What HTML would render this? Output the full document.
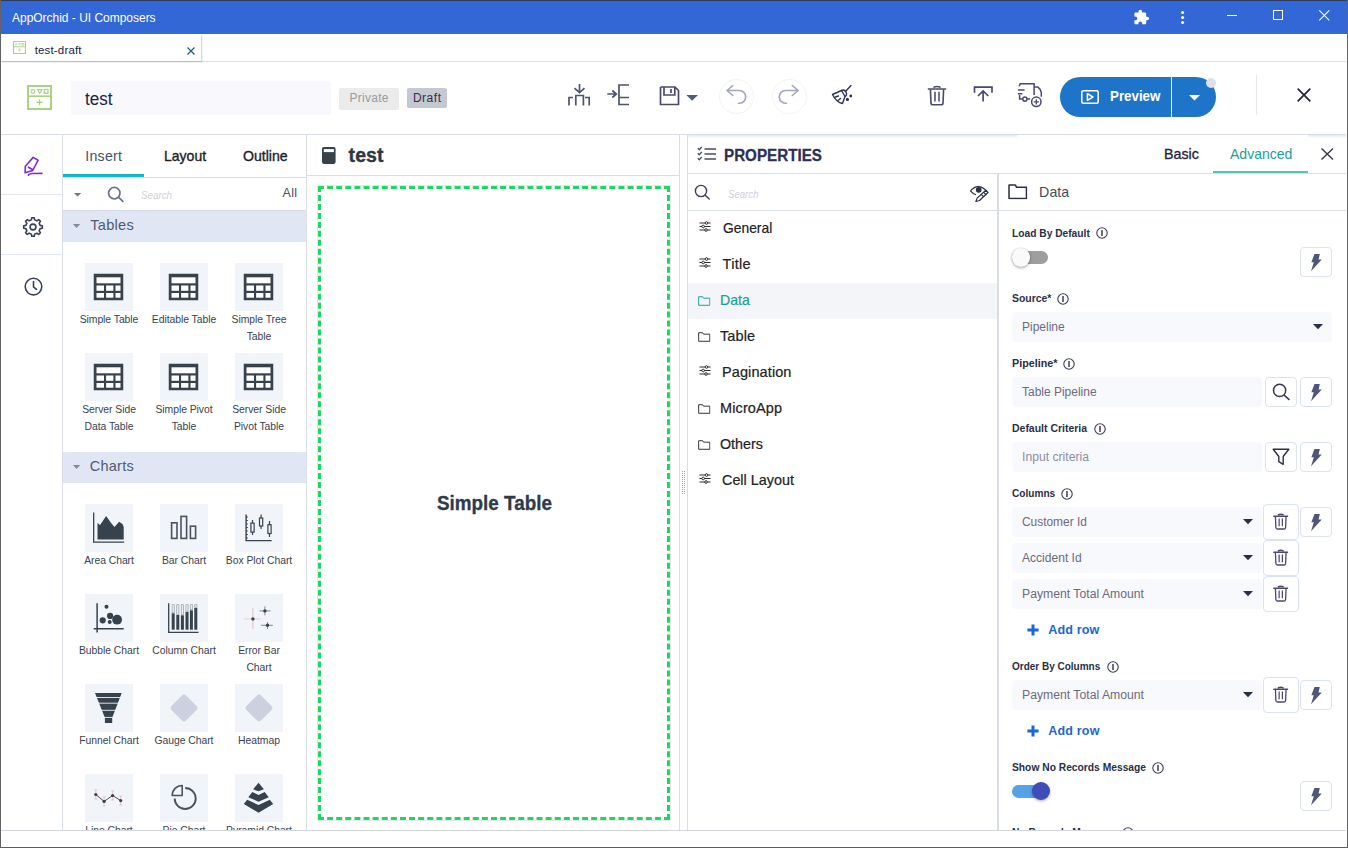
<!DOCTYPE html>
<html>
<head>
<meta charset="utf-8">
<title>AppOrchid - UI Composers</title>
<style>
*{box-sizing:border-box;margin:0;padding:0}
html,body{width:1348px;height:848px;overflow:hidden;background:#fff}
body{font-family:"Liberation Sans",sans-serif;color:#222;position:relative}
.a{position:absolute}
.t{position:absolute;white-space:nowrap;line-height:1}
.ln{position:absolute;background:#d9dee4}
svg{position:absolute;overflow:visible}
/* title bar */
#tb{left:1px;top:1px;width:1346px;height:33px;background:#3367d6}
/* palette */
.tile{position:absolute;width:48px;height:48px;background:#f1f4f9}
.lbl{position:absolute;width:90px;text-align:center;font-size:10.400px;line-height:17px;color:#3a4250;letter-spacing:-.05px;margin-top:-.8px}
.sec{position:absolute;left:63px;width:243px;height:32px;background:#e1e6f4}
.sec .t{left:27px;top:7px;font-size:15px;color:#4f5b73;letter-spacing:.4px}
/* props list */
.li{position:absolute;left:688px;width:309px;height:36px}
.li .t{top:10px;font-size:15px;color:#222;letter-spacing:.1px;-webkit-text-stroke:.2px currentColor}
/* fields */
.flab{position:absolute;left:1012px;font-size:11px;font-weight:bold;color:#2a2f45;white-space:nowrap;line-height:1;letter-spacing:.1px}
.fld{position:absolute;left:1012px;height:30px;background:#f8f9fd;border-radius:4px}
.fld .t{left:10px;top:9px;font-size:12px;color:#6d6a80}
.btn{position:absolute;background:#fff;border:1px solid #dde2f3;border-radius:4px}
</style>
</head>
<body>
<!-- window frame -->
<div class="a" style="left:0;top:0;width:1348px;height:1px;background:#2c3b5e"></div>
<div class="a" style="left:0;top:0;width:1px;height:848px;background:#636363"></div>
<div class="a" style="left:1347px;top:0;width:1px;height:848px;background:#636363"></div>
<div class="a" style="left:0;top:847px;width:1348px;height:1px;background:#606060"></div>

<!-- TITLE BAR -->
<div class="a" id="tb"></div>
<div class="t" id="ttl" style="left:11.7px;top:12.0px;font-size:12.5px;letter-spacing:0.00px;transform:scaleX(0.957);transform-origin:0 0;color:#fff">AppOrchid - UI Composers</div>

<!-- TAB STRIP -->
<div class="ln" style="left:1px;top:61px;width:1345px;height:1px;background:#dcdfe3"></div>
<div class="a" style="left:2px;top:35px;width:200px;height:26px;background:#fff;border-right:1px solid #dcdcdc;box-shadow:0 1px 1px #b9bec5"></div>
<div class="t" id="tabtxt" style="left:34.7px;top:45.0px;font-size:11.5px;letter-spacing:0.16px;transform:scaleX(1.000);transform-origin:0 0;color:#1c1c44">test-draft</div>

<!-- HEADER -->
<div class="ln" style="left:1px;top:134px;width:1345px;height:1px"></div>
<div class="a" style="left:71px;top:81px;width:260px;height:34px;background:#f8f8fd;border-radius:2px"></div>
<div class="t" id="hname" style="left:85.1px;top:90.0px;font-size:18px;letter-spacing:0.00px;transform:scaleX(0.948);transform-origin:0 0;color:#23233f">test</div>
<div class="a" style="left:339px;top:88px;width:60px;height:22px;background:#ebebeb;border-radius:2px"></div>
<div class="t" id="bpriv" style="left:349.4px;top:92.0px;font-size:12px;letter-spacing:0.29px;transform:scaleX(1.000);transform-origin:0 0;color:#9a9a9a">Private</div>
<div class="a" style="left:407px;top:88px;width:40px;height:20px;background:#c3c8d1;border-radius:2px"></div>
<div class="t" id="bdraft" style="left:412.9px;top:92.0px;font-size:12px;letter-spacing:0.52px;transform:scaleX(1.000);transform-origin:0 0;color:#3a2c4c">Draft</div>

<!-- PANEL DIVIDERS -->
<div class="ln" style="left:62px;top:135px;width:1px;height:695px"></div>
<div class="ln" style="left:306px;top:135px;width:1px;height:695px"></div>
<div class="ln" style="left:679px;top:135px;width:1px;height:695px"></div>
<div class="ln" style="left:687px;top:135px;width:1px;height:695px"></div>
<div class="ln" style="left:997px;top:173px;width:2px;height:657px"></div>
<div class="ln" style="left:1px;top:830px;width:1345px;height:1px;background:#d4d8dc"></div>


<!-- shared symbols -->
<svg width="0" height="0" style="left:0;top:0">
 <defs>
  <symbol id="appico" viewBox="0 0 25 25">
   <rect x="1" y="1" width="23" height="23" fill="#fff" stroke="#a9d383" stroke-width="2"/>
   <line x1="1" y1="11.200" x2="24" y2="11.200" stroke="#a9d383" stroke-width="1.700"/>
   <circle cx="5.900" cy="6.500" r="1.900" fill="none" stroke="#a9d383" stroke-width="1.100"/>
   <path d="M10.500 4.600h4.400l-2.200 3.800z" fill="none" stroke="#a9d383" stroke-width="1.100"/>
   <rect x="17.200" y="4.500" width="3.800" height="3.800" fill="none" stroke="#a9d383" stroke-width="1.300"/>
   <path d="M12.600 14.300v5.900M9.700 17.250h5.900" stroke="#a9d383" stroke-width="1.300" fill="none"/>
  </symbol>
  <symbol id="bolt" viewBox="0 0 9.600 15.400"><path fill="#50557a" d="M3.100 0h4.750L6.700 5h2.900L0 15.400 2.500 7.400H0.300z"/></symbol>
  <symbol id="info" viewBox="0 0 12 12">
   <circle cx="6" cy="6" r="5.2" fill="none" stroke="#3b3f55" stroke-width="1.1"/>
   <path d="M6 3.100v5.800" stroke="#2e3247" stroke-width="1.400"/>
  </symbol>
  <symbol id="trash" viewBox="0 0 20 22">
   <path d="M1 4.2h18M7 2.2q3-1.2 6 0" fill="none" stroke="#4a4870" stroke-width="1.7" stroke-linecap="round"/>
   <path d="M3.100 4.600l.6 14.200q.1 1.900 2 1.900h8.600q1.900 0 2-1.900l.6-14.200" fill="none" stroke="#4a4870" stroke-width="1.700"/>
   <path d="M7.9 7.2v10M12.1 7.2v10" stroke="#4a4870" stroke-width="1.6"/>
  </symbol>
  <symbol id="folder" viewBox="0 0 19 15">
   <path d="M1 1h6.2l1.2 2.2H18v10.800H1z" fill="none" stroke-width="1.5" stroke-linejoin="round"/>
  </symbol>
  <symbol id="sliders" viewBox="0 0 12 11">
   <path d="M0.500 2h11M0.500 5.500h11M0.500 9h11" stroke="#2c2c30" stroke-width="1"/>
   <circle cx="7.5" cy="2" r="1.3" fill="#fff" stroke="#2c2c30" stroke-width="1"/>
   <circle cx="4.2" cy="5.5" r="1.3" fill="#fff" stroke="#2c2c30" stroke-width="1"/>
   <circle cx="7" cy="9" r="1.3" fill="#fff" stroke="#2c2c30" stroke-width="1"/>
  </symbol>
  <symbol id="tbl" viewBox="0 0 30 27">
   <rect x="0" y="0" width="30" height="27" fill="#37424c"/>
   <rect x="3" y="3.800" width="24" height="6" fill="#fff"/>
   <rect x="3" y="12" width="7.500" height="5.300" fill="#fff"/><rect x="12.600" y="12" width="7.300" height="5.300" fill="#fff"/><rect x="22" y="12" width="5" height="5.300" fill="#fff"/>
   <rect x="3" y="19.500" width="7.500" height="4.700" fill="#fff"/><rect x="12.600" y="19.500" width="7.300" height="4.700" fill="#fff"/><rect x="22" y="19.500" width="5" height="4.700" fill="#fff"/>
  </symbol>
 </defs>
</svg>

<!-- title bar icons -->
<svg style="left:1133.300px;top:9.400px" width="16.700" height="16.700" viewBox="0 0 24 24"><path fill="#fff" d="M20.500 11H19V7c0-1.100-.9-2-2-2h-4V3.500C13 2.120 11.880 1 10.500 1S8 2.120 8 3.500V5H4c-1.100 0-1.990.9-1.990 2v3.800H3.500c1.490 0 2.700 1.210 2.700 2.700s-1.210 2.700-2.700 2.700H2V20c0 1.100.9 2 2 2h3.800v-1.500c0-1.490 1.210-2.700 2.700-2.700 1.490 0 2.700 1.210 2.700 2.700V22H17c1.100 0 2-.9 2-2v-4h1.500c1.380 0 2.500-1.120 2.500-2.500S21.880 11 20.500 11z"/></svg>
<svg style="left:1180px;top:10px" width="6" height="16"><circle cx="2.600" cy="2.500" r="1.500" fill="#fff"/><circle cx="2.600" cy="7.500" r="1.500" fill="#fff"/><circle cx="2.600" cy="12.500" r="1.500" fill="#fff"/></svg>
<div class="a" style="left:1227px;top:15px;width:10px;height:1px;background:#fff"></div>
<div class="a" style="left:1273px;top:10px;width:10px;height:10px;border:1px solid #fff"></div>
<svg style="left:1319px;top:10px" width="11" height="11"><path d="M0.300 0.300l10 10M10.300 0.300l-10 10" stroke="#fff" stroke-width="1.100"/></svg>

<!-- tab icon + close -->
<svg style="left:13px;top:41px" width="13" height="13"><use href="#appico"/></svg>
<svg style="left:187px;top:47px" width="8" height="8"><path d="M0.500 0.500l7 7M7.500 0.500l-7 7" stroke="#1d5f80" stroke-width="1.200"/></svg>

<!-- header app icon -->
<svg style="left:27.400px;top:85.200px" width="25" height="25"><use href="#appico"/></svg>

<!-- header toolbar icons -->
<svg style="left:560px;top:76px" width="150" height="40" fill="none" stroke="#4e5470" stroke-width="1.700">
 <path d="M19.500 8v8.500M14.500 12.200l5 4.500 5-4.500"/>
 <path d="M9 29.500v-8h4M15.800 29.500v-10h7.600v10M25 21.500h4.200v8"/>
 <path d="M47.300 18h8.500M52.300 14.500l4 3.500-4 3.500"/>
 <path d="M69 9h-10v12.500h10M59 21.500v7h10"/>
 <path d="M100.500 11v17.500h18v-14l-3.500-3.500h-14.500M104 11v8h10.800v-8M111 13v4" stroke="#4a4870"/>
 <path d="M126.300 19h11.700l-5.850 5.800z" fill="#565b7c" stroke="none"/>
</svg>
<!-- undo / redo -->
<div class="a" style="left:719px;top:79px;width:35px;height:35px;border:1px solid #f4f4f8;border-radius:50%"></div>
<div class="a" style="left:772px;top:79px;width:35px;height:35px;border:1px solid #f4f4f8;border-radius:50%"></div>
<svg style="left:710px;top:76px" width="150" height="40" fill="none" stroke="#a3a6ba" stroke-width="1.600" stroke-linecap="round" stroke-linejoin="round">
 <path d="M22.800 9.500l-5.800 5 5.800 5M17 14.500h12.500a6.200 6.400 0 0 1 0 12.800h-1"/>
 <path d="M82.300 9.500l5.800 5-5.800 5M88 14.500h-12.500a6.200 6.400 0 0 0 0 12.800h1"/>
</svg>
<!-- broom -->
<svg style="left:830px;top:80px" width="26" height="28" fill="none" stroke="#2e3458" stroke-width="1.400" stroke-linecap="round" stroke-linejoin="round">
 <path d="M21 5.500l-5.500 6"/>
 <path d="M11.500 10.500q3-1.500 4.500 1.500t-1 4.500"/>
 <path d="M2.500 14.500l9-4 3.500 6-2.500 7q-6-1-10-9z"/>
 <path d="M5.500 17l3-1M8 20.500l2.500-2"/>
 <circle cx="17.400" cy="19.400" r="0.900" fill="#2e3458"/><circle cx="20.800" cy="16" r="0.700" fill="#2e3458"/>
</svg>
<!-- trash / upload / truck -->
<svg style="left:927px;top:84.500px" width="20" height="21"><use href="#trash"/></svg>
<svg style="left:970px;top:80.400px" width="30" height="30" fill="none" stroke="#4a4870" stroke-width="1.700">
 <path d="M4.500 12.700v-5.600h17.500v5.600M13.100 21.400v-10.600M8 16l5.100-5 5.200 5"/>
</svg>
<svg style="left:1014px;top:80px" width="34" height="30" fill="none" stroke="#4a4870" stroke-width="1.500">
 <path d="M5.200 6.200l1-2.400h13.900v11.100M3.900 9.900h6.700M3.900 13.800h4.500M5.600 14.900v4.200h2.800M13.200 19.100h3"/>
 <circle cx="10.900" cy="19.100" r="2.100"/>
 <path d="M20.100 7.100h3.900q2.500 1.500 3.300 5.600v4"/>
 <circle cx="22.300" cy="21.800" r="4.700" fill="#fff"/>
 <path d="M22.300 19.200v5.200M19.700 21.800h5.200" stroke-width="1.300"/>
</svg>
<!-- preview button -->
<div class="a" style="left:1060px;top:77px;width:156px;height:40px;border-radius:20px;background:#1e74c9"></div>
<div class="a" style="left:1170.500px;top:77px;width:1.500px;height:40px;background:#e6eef9"></div>
<svg style="left:1081px;top:90px" width="18" height="14" fill="none" stroke="#fff" stroke-width="1.500"><rect x="0.800" y="0.800" width="16.400" height="12.400" rx="1.500"/><path d="M6.400 3.700v6.600l5.500-3.300z" stroke-width="1.500" stroke-linejoin="round"/></svg>
<div class="t" id="prev" style="left:1109.9px;top:89.0px;font-size:14.5px;letter-spacing:0.00px;transform:scaleX(0.919);transform-origin:0 0;font-weight:bold;color:#fff">Preview</div>
<svg style="left:1188.500px;top:94.500px" width="11" height="6"><path d="M0 0h11l-5.500 5.500z" fill="#fff"/></svg>
<div class="a" style="left:1205.500px;top:77.800px;width:10px;height:10px;border-radius:50%;background:#dcdff0"></div>
<div class="a" style="left:1256px;top:75px;width:1px;height:40px;background:#e2e6f0"></div>
<svg style="left:1297px;top:88px" width="14" height="14"><path d="M0.700 0.700l12.600 12.600M13.300 0.700l-12.600 12.600" stroke="#23233a" stroke-width="1.700"/></svg>

<!-- LEFT RAIL -->
<div class="ln" style="left:1px;top:194px;width:61px;height:1px;background:#e4e7f6"></div>
<div class="ln" style="left:1px;top:254px;width:61px;height:1px;background:#e4e7f6"></div>
<svg style="left:20px;top:152px" width="28" height="28" fill="none" stroke="#7c2ae8" stroke-width="1.600" stroke-linejoin="round" stroke-linecap="round">
 <path d="M13.200 5.400l4.800 2.900-5.300 10.200-7.600 2.300.2-6.600z"/>
 <path d="M8.400 15.200l4.100 2.300"/>
 <path d="M8.400 23.200c.3-1.100 1.500-1.600 4-1.700l9.500-.1"/>
</svg>
<svg style="left:21px;top:214.600px" width="24" height="24" viewBox="-12 -12 24 24" fill="none" stroke="#3a3f5a" stroke-width="1.600" stroke-linejoin="round">
 <path d="M7.120 -1.610 L9.320 -1.240 L9.320 1.240 L7.120 1.610 L6.170 3.890 L7.460 5.710 L5.710 7.460 L3.890 6.170 L1.610 7.120 L1.240 9.320 L-1.240 9.320 L-1.610 7.120 L-3.890 6.170 L-5.710 7.460 L-7.460 5.710 L-6.170 3.890 L-7.120 1.610 L-9.320 1.240 L-9.320 -1.240 L-7.120 -1.610 L-6.170 -3.890 L-7.460 -5.710 L-5.710 -7.460 L-3.890 -6.170 L-1.610 -7.120 L-1.240 -9.320 L1.240 -9.320 L1.610 -7.120 L3.890 -6.170 L5.710 -7.460 L7.460 -5.710 L6.170 -3.890Z"/>
 <circle cx="0" cy="0" r="2.900"/>
</svg>
<svg style="left:22.700px;top:275.700px" width="22" height="22" fill="none" stroke="#3a3f5a" stroke-width="1.600" stroke-linecap="round"><circle cx="10.500" cy="10.600" r="8.300"/><path d="M10.500 5.600v5.200l3 2.500"/></svg>


<!-- PALETTE -->
<div class="t" id="tIns" style="left:85.3px;top:149.0px;font-size:14.2px;letter-spacing:0.24px;transform:scaleX(1.000);transform-origin:0 0;color:#4a5068">Insert</div>
<div class="t" id="tLay" style="left:163.6px;top:149.0px;font-size:14.2px;letter-spacing:0.00px;transform:scaleX(0.988);transform-origin:0 0;color:#1e1e2a;-webkit-text-stroke:0.350px #1e1e2a">Layout</div>
<div class="t" id="tOut" style="left:243.3px;top:149.0px;font-size:14.2px;letter-spacing:0.00px;transform:scaleX(0.994);transform-origin:0 0;color:#1e1e2a;-webkit-text-stroke:0.350px #1e1e2a">Outline</div>
<div class="ln" style="left:63px;top:177px;width:243px;height:1px"></div>
<div class="a" style="left:63px;top:174px;width:81px;height:3px;background:#10b9c9"></div>
<svg style="left:73.500px;top:192.500px" width="8" height="4"><path d="M0 0h7.200l-3.600 3.600z" fill="#6f7688"/></svg>
<svg style="left:106px;top:185px" width="20" height="20" fill="none" stroke="#6a7488" stroke-width="1.700" stroke-linecap="round"><circle cx="8.300" cy="8.100" r="5.700"/><path d="M12.600 12.300l4.300 4.100"/></svg>
<div class="t" id="pSearch" style="left:141.3px;top:190.0px;font-size:10.5px;letter-spacing:0.00px;transform:scaleX(0.934);transform-origin:0 0;font-style:italic;color:#cfd0d6">Search</div>
<div class="t" id="pAll" style="left:282.6px;top:187.0px;font-size:12.5px;letter-spacing:0.30px;transform:scaleX(1.000);transform-origin:0 0;color:#4a4f5e">All</div>
<div class="sec" style="top:210px;border-top:1px solid #d9dee4"><div class="t" id="sTables" style="left:27.3px;top:7.0px;font-size:14.6px;letter-spacing:0.26px;transform:scaleX(1.000);transform-origin:0 0;">Tables</div></div>
<svg style="left:73px;top:224px" width="8" height="5"><path d="M0 0h7.200l-3.600 4z" fill="#8089a0"/></svg>
<div class="sec" style="top:452px;height:31px"><div class="t" id="sCharts" style="left:26.8px;top:7.0px;font-size:14.5px;letter-spacing:0.24px;transform:scaleX(1.000);transform-origin:0 0;">Charts</div></div>
<svg style="left:73px;top:465px" width="8" height="5"><path d="M0 0h7.200l-3.600 4z" fill="#8089a0"/></svg>
<div class="a" style="left:63px;top:242px;width:243px;height:588px;overflow:hidden"><div class="a" style="left:-63px;top:-242px">
<div class="tile" style="left:85px;top:263px"></div><svg style="left:85px;top:263px" width="48" height="48"><use href="#tbl" x="8.500" y="10.500" width="30" height="27"/></svg>
<div class="lbl" style="left:64px;top:312px">Simple Table</div>
<div class="tile" style="left:160px;top:263px"></div><svg style="left:160px;top:263px" width="48" height="48"><use href="#tbl" x="8.500" y="10.500" width="30" height="27"/></svg>
<div class="lbl" style="left:139px;top:312px">Editable Table</div>
<div class="tile" style="left:235px;top:263px"></div><svg style="left:235px;top:263px" width="48" height="48"><use href="#tbl" x="8.500" y="10.500" width="30" height="27"/></svg>
<div class="lbl" style="left:214px;top:312px">Simple Tree<br>Table</div>
<div class="tile" style="left:85px;top:353px"></div><svg style="left:85px;top:353px" width="48" height="48"><use href="#tbl" x="8.500" y="10.500" width="30" height="27"/></svg>
<div class="lbl" style="left:64px;top:402px">Server Side<br>Data Table</div>
<div class="tile" style="left:160px;top:353px"></div><svg style="left:160px;top:353px" width="48" height="48"><use href="#tbl" x="8.500" y="10.500" width="30" height="27"/></svg>
<div class="lbl" style="left:139px;top:402px">Simple Pivot<br>Table</div>
<div class="tile" style="left:235px;top:353px"></div><svg style="left:235px;top:353px" width="48" height="48"><use href="#tbl" x="8.500" y="10.500" width="30" height="27"/></svg>
<div class="lbl" style="left:214px;top:402px">Server Side<br>Pivot Table</div>
<div class="tile" style="left:85px;top:504px"></div><svg style="left:85px;top:504px" width="48" height="48"><path d="M8.700 8.600v29.500h30.500" fill="none" stroke="#37424c" stroke-width="1.300"/><path d="M12.500 35.500V19.100l2.600 2L21.100 12.100l5 7 3.400 4 4.600-5.400 3.400 2.400 1.200 3v12.400z" fill="#37424c"/></svg>
<div class="lbl" style="left:64px;top:553px">Area Chart</div>
<div class="tile" style="left:160px;top:504px"></div><svg style="left:160px;top:504px" width="48" height="48"><g fill="none" stroke="#4a535d" stroke-width="1.600"><rect x="11.600" y="18.800" width="5.400" height="15.600"/><rect x="21" y="12.400" width="5.600" height="22"/><rect x="30.400" y="22.200" width="5.200" height="12.200"/></g></svg>
<div class="lbl" style="left:139px;top:553px">Bar Chart</div>
<div class="tile" style="left:235px;top:504px"></div><svg style="left:235px;top:504px" width="48" height="48"><g fill="none" stroke="#37424c" stroke-width="1.200"><path d="M11.100 10.600v26h25.500" stroke-width="1.400"/><path d="M11.100 13h1.800M11.100 16.500h1.800M11.100 20h1.800M11.100 23.500h1.800M11.100 27h1.800M11.100 30.500h1.800M11.100 34h1.800" stroke-width="0.900"/><path d="M17.500 16.100v3M17.500 28.100v3M26.100 10.600v3.400M26.100 22v3M34.500 17v3.700M34.500 29.500v3.500"/><rect x="15.900" y="19.100" width="3.200" height="9"/><rect x="24.500" y="14" width="3.200" height="8"/><rect x="32.900" y="20.700" width="3.200" height="8.800"/></g></svg>
<div class="lbl" style="left:214px;top:553px">Box Plot Chart</div>
<div class="tile" style="left:85px;top:594px"></div><svg style="left:85px;top:594px" width="48" height="48"><path d="M12.100 9.300v29.100M8.700 34.700h30" fill="none" stroke="#37424c" stroke-width="1.500"/><g fill="#37424c"><circle cx="21.500" cy="12.700" r="2"/><circle cx="17.700" cy="26.300" r="3.100"/><circle cx="25.100" cy="21.900" r="3.100"/><circle cx="24.700" cy="28.100" r="2"/><circle cx="32.100" cy="25.700" r="4.900"/></g></svg>
<div class="lbl" style="left:64px;top:643px">Bubble Chart</div>
<div class="tile" style="left:160px;top:594px"></div><svg style="left:160px;top:594px" width="48" height="48"><path d="M8.700 9.300v29.100h29.800" fill="none" stroke="#37424c" stroke-width="1.300"/><rect x="11.7" y="19.3" width="3" height="16.4" fill="#37424c"/><rect x="12.1" y="10.700" width="2.200" height="8.0" fill="#e8ebee" stroke="#9aa3ab" stroke-width="0.700"/><rect x="16.3" y="20.9" width="3" height="14.8" fill="#37424c"/><rect x="16.7" y="10.700" width="2.200" height="9.6" fill="#e8ebee" stroke="#9aa3ab" stroke-width="0.700"/><rect x="20.9" y="21.3" width="3" height="14.4" fill="#37424c"/><rect x="21.299999999999997" y="10.700" width="2.200" height="10.0" fill="#e8ebee" stroke="#9aa3ab" stroke-width="0.700"/><rect x="25.5" y="17.9" width="3" height="17.8" fill="#37424c"/><rect x="25.9" y="10.700" width="2.200" height="6.6" fill="#e8ebee" stroke="#9aa3ab" stroke-width="0.700"/><rect x="29.9" y="16.3" width="3" height="19.4" fill="#37424c"/><rect x="30.299999999999997" y="10.700" width="2.200" height="5.0" fill="#e8ebee" stroke="#9aa3ab" stroke-width="0.700"/><rect x="34.3" y="13.9" width="3" height="21.8" fill="#37424c"/><rect x="34.699999999999996" y="10.700" width="2.200" height="2.6" fill="#e8ebee" stroke="#9aa3ab" stroke-width="0.700"/></svg>
<div class="lbl" style="left:139px;top:643px">Column Chart</div>
<div class="tile" style="left:235px;top:594px"></div><svg style="left:235px;top:594px" width="48" height="48"><g stroke="#e8a0a0" stroke-width="0.700" fill="none"><path d="M17.900 14.300v20.600"/><path d="M29.900 12.300v9M32.500 28.300v6.700" stroke="#37424c" stroke-width="0.600"/><path d="M9 24.900h16.500" stroke="#d8c0c4"/><path d="M24.500 16.900h11M25.900 31.300h12" stroke="#37424c" stroke-width="0.600"/></g><g fill="#37424c"><circle cx="17.900" cy="24.900" r="1.700"/><circle cx="29.900" cy="16.900" r="1.700"/><circle cx="32.500" cy="31.300" r="1.700"/></g></svg>
<div class="lbl" style="left:214px;top:643px">Error Bar<br>Chart</div>
<div class="tile" style="left:85px;top:684px"></div><svg style="left:85px;top:684px" width="48" height="48"><path d="M10 9.100h26.700L27.200 33.800v5.100h-7.300v-5.100z" fill="#37424c"/><path d="M9 13.500h30M9 19.200h30M9 26.300h30M9 33.400h30" stroke="#f1f4f9" stroke-width="0.900"/></svg>
<div class="lbl" style="left:64px;top:733px">Funnel Chart</div>
<div class="tile" style="left:160px;top:684px"></div><svg style="left:160px;top:684px" width="48" height="48"><rect x="13.700" y="13.700" width="20.600" height="20.600" rx="3.200" fill="#cdd0de" transform="rotate(45 24 24)"/></svg>
<div class="lbl" style="left:139px;top:733px">Gauge Chart</div>
<div class="tile" style="left:235px;top:684px"></div><svg style="left:235px;top:684px" width="48" height="48"><rect x="13.700" y="13.700" width="20.600" height="20.600" rx="3.200" fill="#cdd0de" transform="rotate(45 24 24)"/></svg>
<div class="lbl" style="left:214px;top:733px">Heatmap</div>
<div class="tile" style="left:85px;top:774px"></div><svg style="left:85px;top:774px" width="48" height="48"><g stroke="#e9a6a6" stroke-width="0.600" fill="none"><path d="M10.8 16.0v9M9.3 16.0h3M9.3 25.0h3"/><path d="M19.1 22.9v9M17.6 22.9h3M17.6 31.9h3"/><path d="M27.6 17.0v9M26.1 17.0h3M26.1 26.0h3"/><path d="M35.7 22.1v9M34.2 22.1h3M34.2 31.1h3"/></g><path d="M10.8 20.5 L19.1 27.4 L27.6 21.5 L35.7 26.6" fill="none" stroke="#37424c" stroke-width="0.900"/><circle cx="10.8" cy="20.5" r="1.600" fill="#37424c"/><circle cx="19.1" cy="27.4" r="1.600" fill="#37424c"/><circle cx="27.6" cy="21.5" r="1.600" fill="#37424c"/><circle cx="35.7" cy="26.6" r="1.600" fill="#37424c"/></svg>
<div class="lbl" style="left:64px;top:823px">Line Chart</div>
<div class="tile" style="left:160px;top:774px"></div><svg style="left:160px;top:774px" width="48" height="48"><g fill="none" stroke="#4a535d" stroke-width="1.900"><path d="M25.200 14a10.500 10.500 0 1 1-10.500 10.500"/><path d="M22.200 11.500v10h-10a10 10 0 0 1 10-10z" stroke-linejoin="round" stroke-width="1.600"/></g></svg>
<div class="lbl" style="left:139px;top:823px">Pie Chart</div>
<div class="tile" style="left:235px;top:774px"></div><svg style="left:235px;top:774px" width="48" height="48"><g fill="#37424c"><path d="M23.5 8.8l5.4 6.5-5.4 2-5.4-2z"/><path d="M17.3 18l6.2 3.05 6.2-3.05 4 5.2-10.2 4.5-10.2-4.5z"/><path d="M12.2 25.75l11.3 5.25 11.3-5.25 3.400 4.25-14.700 8.800-14.700-8.800z"/></g></svg>
<div class="lbl" style="left:214px;top:823px">Pyramid Chart</div>
</div></div>


<!-- CANVAS -->
<div class="ln" style="left:307px;top:175px;width:372px;height:1px"></div>
<svg style="left:322.200px;top:147px" width="14" height="17"><rect x="0" y="0" width="13.600" height="16.900" rx="1.800" fill="#36434d"/><rect x="1.800" y="2.100" width="10.100" height="3" fill="#fff"/></svg>
<div class="t" id="cTitle" style="left:348.6px;top:146.0px;font-size:19.5px;letter-spacing:0.04px;transform:scaleX(1.000);transform-origin:0 0;font-weight:bold;color:#2d3742;-webkit-text-stroke:.35px #2d3742">test</div>
<div class="a" style="left:317px;top:185px;width:354px;height:636px;border:1px solid #e9e9ec"></div>
<div class="a" style="left:318px;top:186px;width:352px;height:634px;border:3px dashed #1cd760"></div>
<div class="t" id="cST" style="left:436.5px;top:493.0px;font-size:20.4px;letter-spacing:0.00px;transform:scaleX(0.925);transform-origin:0 0;font-weight:bold;color:#2f3a48;-webkit-text-stroke:.3px #2f3a48">Simple Table</div>
<!-- splitter handle -->
<svg style="left:682px;top:471px" width="3" height="23" fill="#8fa9c9" shape-rendering="crispEdges"><rect x="0" y="0" width="1" height="1"/><rect x="2" y="0" width="1" height="1"/><rect x="0" y="2" width="1" height="1"/><rect x="2" y="2" width="1" height="1"/><rect x="0" y="4" width="1" height="1"/><rect x="2" y="4" width="1" height="1"/><rect x="0" y="6" width="1" height="1"/><rect x="2" y="6" width="1" height="1"/><rect x="0" y="8" width="1" height="1"/><rect x="2" y="8" width="1" height="1"/><rect x="0" y="10" width="1" height="1"/><rect x="2" y="10" width="1" height="1"/><rect x="0" y="12" width="1" height="1"/><rect x="2" y="12" width="1" height="1"/><rect x="0" y="14" width="1" height="1"/><rect x="2" y="14" width="1" height="1"/><rect x="0" y="16" width="1" height="1"/><rect x="2" y="16" width="1" height="1"/><rect x="0" y="18" width="1" height="1"/><rect x="2" y="18" width="1" height="1"/><rect x="0" y="20" width="1" height="1"/><rect x="2" y="20" width="1" height="1"/><rect x="0" y="22" width="1" height="1"/><rect x="2" y="22" width="1" height="1"/></svg>


<!-- PROPERTIES LIST -->
<div class="a" style="left:688px;top:135px;width:329px;height:3px;background:linear-gradient(#e3e7f8,#fff)"></div>
<div class="a" style="left:1308px;top:135px;width:38px;height:3px;background:linear-gradient(#e3e7f8,#fff)"></div>

<svg style="left:697px;top:146px" width="20" height="16" fill="none" stroke="#464e66" stroke-width="1.700">
 <path d="M7.500 3h11.500M7.500 8h11.500M7.500 13h11.500"/>
 <path d="M0.800 2.300l1.500 1.500 2.500-2.900M0.800 7.300l1.500 1.500 2.500-2.900M0.800 12.300l1.500 1.500 2.500-2.900" stroke-width="1.400"/>
</svg>
<div class="t" id="pTitle" style="left:723.8px;top:147.0px;font-size:17.2px;letter-spacing:0.00px;transform:scaleX(0.884);transform-origin:0 0;font-weight:bold;color:#2b2f55;-webkit-text-stroke:.3px #2b2f55">PROPERTIES</div>
<div class="ln" style="left:688px;top:173px;width:658px;height:1px"></div>
<div class="ln" style="left:688px;top:210px;width:658px;height:1px"></div>
<svg style="left:693px;top:183px" width="18" height="18" fill="none" stroke="#3c4050" stroke-width="1.400" stroke-linecap="round"><circle cx="8" cy="8" r="5.600"/><path d="M12.200 12.200l4 3.800"/></svg>
<div class="t" id="lSearch" style="left:727.6px;top:189.0px;font-size:10.5px;letter-spacing:0.00px;transform:scaleX(0.916);transform-origin:0 0;font-style:italic;color:#cfd0d6">Search</div>
<svg style="left:969px;top:182px" width="21" height="21" fill="none" stroke="#2c3040" stroke-width="1.200" stroke-linejoin="round">
 <path d="M1.500 8.800q7.500-8.500 16 0"/><path d="M1.500 8.800q2.500 3 5.500 4"/>
 <circle cx="9.700" cy="7.800" r="2.300" fill="#2c3040"/>
 <path d="M16.800 8.200l2.200 2.300-8.500 8-3.600 1 1.200-3.400z"/><path d="M14.500 10.200l2.200 2.300M12.300 12.300l2.200 2.300"/>
</svg>
<div class="li" style="top:211px;"><svg style="left:11.300px;top:10.400px" width="12" height="11"><use href="#sliders"/></svg><div class="t" id="li0" style="left:34.5px;top:10.0px;font-size:14.5px;letter-spacing:0.00px;transform:scaleX(0.954);transform-origin:0 0;color:#222">General</div></div>
<div class="li" style="top:247px;"><svg style="left:11.300px;top:10.400px" width="12" height="11"><use href="#sliders"/></svg><div class="t" id="li1" style="left:34.5px;top:10.0px;font-size:14.5px;letter-spacing:0.31px;transform:scaleX(1.000);transform-origin:0 0;color:#222">Title</div></div>
<div class="li" style="top:283px;background:#f4f5f9;"><svg style="left:10px;top:12.500px" width="12.500" height="10" stroke="#1b9f9a"><use href="#folder"/></svg><div class="t" id="li2" style="left:32.0px;top:10.0px;font-size:14.5px;letter-spacing:0.00px;transform:scaleX(0.973);transform-origin:0 0;color:#1b9f9a">Data</div></div>
<div class="li" style="top:319px;"><svg style="left:10px;top:12.500px" width="12.500" height="10" stroke="#333"><use href="#folder"/></svg><div class="t" id="li3" style="left:32.0px;top:10.0px;font-size:14.5px;letter-spacing:0.11px;transform:scaleX(1.000);transform-origin:0 0;color:#222">Table</div></div>
<div class="li" style="top:355px;"><svg style="left:11.300px;top:10.400px" width="12" height="11"><use href="#sliders"/></svg><div class="t" id="li4" style="left:34.0px;top:10.0px;font-size:14.5px;letter-spacing:0.10px;transform:scaleX(1.000);transform-origin:0 0;color:#222">Pagination</div></div>
<div class="li" style="top:391px;"><svg style="left:10px;top:12.500px" width="12.500" height="10" stroke="#333"><use href="#folder"/></svg><div class="t" id="li5" style="left:32.0px;top:10.0px;font-size:14.5px;letter-spacing:0.12px;transform:scaleX(1.000);transform-origin:0 0;color:#222">MicroApp</div></div>
<div class="li" style="top:427px;"><svg style="left:10px;top:12.500px" width="12.500" height="10" stroke="#333"><use href="#folder"/></svg><div class="t" id="li6" style="left:32.0px;top:10.0px;font-size:14.5px;letter-spacing:0.00px;transform:scaleX(0.986);transform-origin:0 0;color:#222">Others</div></div>
<div class="li" style="top:463px;"><svg style="left:11.300px;top:10.400px" width="12" height="11"><use href="#sliders"/></svg><div class="t" id="li7" style="left:34.0px;top:10.0px;font-size:14.5px;letter-spacing:0.00px;transform:scaleX(0.991);transform-origin:0 0;color:#222">Cell Layout</div></div>


<!-- DETAIL PANEL -->
<div class="t" id="dBasic" style="left:1164.3px;top:147.0px;font-size:14.5px;letter-spacing:0.00px;transform:scaleX(0.981);transform-origin:0 0;color:#1f2340;-webkit-text-stroke:0.300px #1f2340">Basic</div>
<div class="t" id="dAdv" style="left:1229.5px;top:147.0px;font-size:14.5px;letter-spacing:0.00px;transform:scaleX(0.966);transform-origin:0 0;color:#1b9f9a">Advanced</div>
<div class="a" style="left:1213px;top:171px;width:95px;height:2px;background:#52c6be"></div>
<svg style="left:1321px;top:148px" width="13" height="12"><path d="M0.500 0.500l11.500 11M12 0.500l-11.500 11" stroke="#333846" stroke-width="1.400"/></svg>
<svg style="left:1008px;top:183.500px" width="19.500" height="15.500" stroke="#2b3040"><use href="#folder"/></svg>
<div class="t" id="dData" style="left:1039.1px;top:185.0px;font-size:14.2px;letter-spacing:0.04px;transform:scaleX(1.000);transform-origin:0 0;color:#444c5e">Data</div>
<div class="a" style="left:998px;top:211px;width:348px;height:619px;overflow:hidden"><div class="a" style="left:-998px;top:-211px">
<div class="flab" id="f1" style="left:1011.9px;top:228.0px;font-size:11px;letter-spacing:0.00px;transform:scaleX(0.929);transform-origin:0 0;">Load By Default</div><svg style="left:1095.8px;top:227.4px" width="12" height="12"><use href="#info"/></svg>
<div class="a" style="left:1012px;top:250.500px;width:36px;height:13.500px;border-radius:7px;background:#9e9e9e"></div><div class="a" style="left:1011.500px;top:248.200px;width:18.500px;height:18.500px;border-radius:50%;background:#fafafa;box-shadow:0 1px 3px rgba(0,0,0,.35),0 0 1px rgba(0,0,0,.2)"></div>
<div class="btn" style="left:1300px;top:247px;width:32px;height:30px"></div><svg style="left:1310.6px;top:253.5px" width="10.800" height="17.300"><use href="#bolt"/></svg>
<div class="flab" id="f2" style="left:1011.9px;top:293.0px;font-size:11px;letter-spacing:0.00px;transform:scaleX(0.945);transform-origin:0 0;">Source*</div><svg style="left:1057.1px;top:292.59999999999997px" width="12" height="12"><use href="#info"/></svg>
<div class="fld" style="top:312px;width:320px"><div class="t" id="v2" style="left:10.1px;top:9.0px;font-size:12.5px;letter-spacing:0.00px;transform:scaleX(0.960);transform-origin:0 0;color:#6d6a80">Pipeline</div></div>
<svg style="left:1312.7px;top:323.8px" width="10" height="6"><path d="M0 0h10l-5 5.200z" fill="#2a2f45"/></svg>
<div class="flab" id="f3" style="left:1011.9px;top:358.0px;font-size:11px;letter-spacing:0.00px;transform:scaleX(0.979);transform-origin:0 0;">Pipeline*</div><svg style="left:1063.1px;top:357.5px" width="12" height="12"><use href="#info"/></svg>
<div class="fld" style="top:377px;width:250px"><div class="t" id="v3" style="left:10.1px;top:9.0px;font-size:12.5px;letter-spacing:0.00px;transform:scaleX(0.958);transform-origin:0 0;color:#6d6a80">Table Pipeline</div></div>
<div class="btn" style="left:1265px;top:377px;width:32px;height:30px"></div><svg style="left:1271px;top:382px" width="20" height="20" fill="none" stroke="#3a3550" stroke-width="1.500"><circle cx="8.600" cy="8.400" r="6.100"/><path d="M13.100 13.100l5.300 4.800"/></svg>
<div class="btn" style="left:1300px;top:377px;width:32px;height:30px"></div><svg style="left:1310.6px;top:383.5px" width="10.800" height="17.300"><use href="#bolt"/></svg>
<div class="flab" id="f4" style="left:1011.9px;top:423.0px;font-size:11px;letter-spacing:0.00px;transform:scaleX(0.952);transform-origin:0 0;">Default Criteria</div><svg style="left:1093.7px;top:422.5px" width="12" height="12"><use href="#info"/></svg>
<div class="fld" style="top:442px;width:250px"><div class="t" id="v4" style="left:10.1px;top:9.0px;font-size:12.5px;letter-spacing:0.00px;transform:scaleX(0.974);transform-origin:0 0;color:#8e8ea3">Input criteria</div></div>
<div class="btn" style="left:1265px;top:442px;width:32px;height:30px"></div><svg style="left:1272px;top:448px" width="18" height="18" fill="none" stroke="#2c3040" stroke-width="1.400" stroke-linejoin="round"><path d="M1.200 1.200h15.600l-5.600 7.300v7.800l-4.400-2.600v-5.200z"/></svg>
<div class="btn" style="left:1300px;top:442px;width:32px;height:30px"></div><svg style="left:1310.6px;top:448.5px" width="10.800" height="17.300"><use href="#bolt"/></svg>
<div class="flab" id="f5" style="left:1011.9px;top:488.0px;font-size:11px;letter-spacing:0.00px;transform:scaleX(0.918);transform-origin:0 0;">Columns</div><svg style="left:1061px;top:487.7px" width="12" height="12"><use href="#info"/></svg>
<div class="fld" style="top:507px;width:250px"><div class="t" id="v5" style="left:10.1px;top:9.0px;font-size:12.5px;letter-spacing:0.00px;transform:scaleX(0.953);transform-origin:0 0;color:#6d6a80">Customer Id</div></div>
<svg style="left:1243px;top:518.8px" width="10" height="6"><path d="M0 0h10l-5 5.200z" fill="#2a2f45"/></svg>
<div class="btn" style="left:1263px;top:504px;width:36px;height:35.500px"></div><svg style="left:1273.200px;top:513.0px" width="15.500" height="17"><use href="#trash"/></svg>
<div class="btn" style="left:1300px;top:507px;width:32px;height:30px"></div><svg style="left:1310.6px;top:513.5px" width="10.800" height="17.300"><use href="#bolt"/></svg>
<div class="fld" style="top:543px;width:250px"><div class="t" id="v6" style="left:10.1px;top:9.0px;font-size:12.5px;letter-spacing:0.00px;transform:scaleX(0.965);transform-origin:0 0;color:#6d6a80">Accident Id</div></div>
<svg style="left:1243px;top:554.8px" width="10" height="6"><path d="M0 0h10l-5 5.200z" fill="#2a2f45"/></svg>
<div class="btn" style="left:1263px;top:540px;width:36px;height:35.500px"></div><svg style="left:1273.200px;top:549.0px" width="15.500" height="17"><use href="#trash"/></svg>
<div class="fld" style="top:579px;width:250px"><div class="t" id="v7" style="left:10.1px;top:9.0px;font-size:12.5px;letter-spacing:0.00px;transform:scaleX(0.977);transform-origin:0 0;color:#6d6a80">Payment Total Amount</div></div>
<svg style="left:1243px;top:590.8px" width="10" height="6"><path d="M0 0h10l-5 5.200z" fill="#2a2f45"/></svg>
<div class="btn" style="left:1263px;top:576px;width:36px;height:35.500px"></div><svg style="left:1273.200px;top:585.0px" width="15.500" height="17"><use href="#trash"/></svg>
<svg style="left:1027px;top:623.5px" width="12" height="12"><path d="M6 0.400v11.200M0.400 6h11.200" stroke="#1b66d8" stroke-width="3"/></svg><div class="t" id="ar1" style="left:1048.3px;top:624.0px;font-size:12.6px;letter-spacing:0.12px;transform:scaleX(1.000);transform-origin:0 0;font-weight:bold;color:#1b66d8">Add row</div>
<div class="flab" id="f6" style="left:1011.9px;top:661.0px;font-size:11px;letter-spacing:0.00px;transform:scaleX(0.908);transform-origin:0 0;">Order By Columns</div><svg style="left:1106.8px;top:660.6999999999999px" width="12" height="12"><use href="#info"/></svg>
<div class="fld" style="top:680px;width:250px"><div class="t" id="v8" style="left:10.1px;top:9.0px;font-size:12.5px;letter-spacing:0.00px;transform:scaleX(0.977);transform-origin:0 0;color:#6d6a80">Payment Total Amount</div></div>
<svg style="left:1243px;top:691.8px" width="10" height="6"><path d="M0 0h10l-5 5.200z" fill="#2a2f45"/></svg>
<div class="btn" style="left:1263px;top:677px;width:36px;height:35.500px"></div><svg style="left:1273.200px;top:686.0px" width="15.500" height="17"><use href="#trash"/></svg>
<div class="btn" style="left:1300px;top:680px;width:32px;height:30px"></div><svg style="left:1310.6px;top:686.5px" width="10.800" height="17.300"><use href="#bolt"/></svg>
<svg style="left:1027px;top:725px" width="12" height="12"><path d="M6 0.400v11.200M0.400 6h11.200" stroke="#1b66d8" stroke-width="3"/></svg><div class="t" id="ar2" style="left:1048.3px;top:725.0px;font-size:12.5px;letter-spacing:0.18px;transform:scaleX(1.000);transform-origin:0 0;font-weight:bold;color:#1b66d8">Add row</div>
<div class="flab" id="f7" style="left:1011.9px;top:762.0px;font-size:11px;letter-spacing:0.00px;transform:scaleX(0.933);transform-origin:0 0;">Show No Records Message</div><svg style="left:1152.1px;top:761.5px" width="12" height="12"><use href="#info"/></svg>
<div class="a" style="left:1012px;top:784.500px;width:36px;height:13.500px;border-radius:7px;background:#56a1e8"></div><div class="a" style="left:1031.500px;top:781.800px;width:18.500px;height:18.500px;border-radius:50%;background:#3f4db8;box-shadow:0 1px 3px rgba(0,0,0,.35)"></div>
<div class="btn" style="left:1300px;top:781px;width:32px;height:30px"></div><svg style="left:1310.6px;top:787.5px" width="10.800" height="17.300"><use href="#bolt"/></svg>
<div class="flab" id="f8" style="left:1011.9px;top:827.0px;font-size:11px;letter-spacing:0.00px;transform:scaleX(0.930);transform-origin:0 0;">No Records Message</div><svg style="left:1121.5px;top:826.5px" width="12" height="12"><use href="#info"/></svg>
</div></div>

</body>
</html>
